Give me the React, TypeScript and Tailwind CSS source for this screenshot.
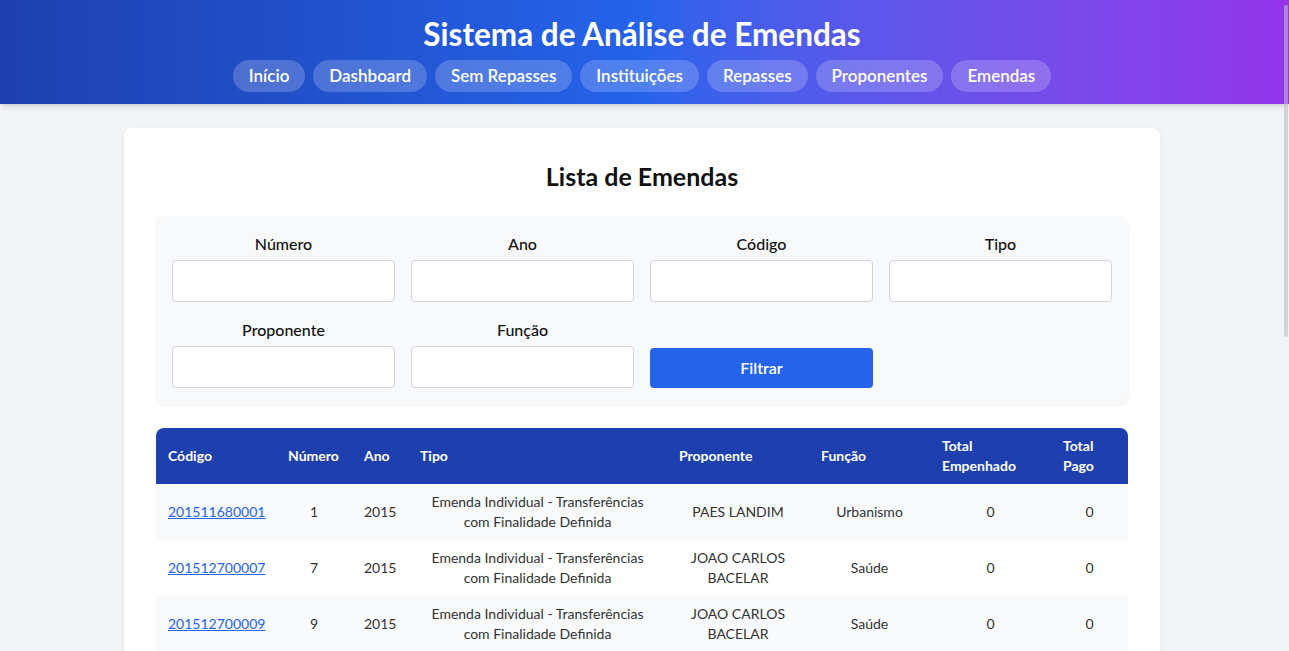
import React from 'react';

interface Emenda {
    codigo: string;
    numero: number;
    ano: number;
    tipo: string;
    proponente: string;
    funcao: string;
    totalEmpenhado: string;
    totalPago: string;
}

const TIPO = 'Emenda Individual - Transferências com Finalidade Definida';

const emendas: Emenda[] = [
    { codigo: '201511680001', numero: 1, ano: 2015, tipo: TIPO, proponente: 'PAES LANDIM', funcao: 'Urbanismo', totalEmpenhado: '0', totalPago: '0' },
    { codigo: '201512700007', numero: 7, ano: 2015, tipo: TIPO, proponente: 'JOAO CARLOS BACELAR', funcao: 'Saúde', totalEmpenhado: '0', totalPago: '0' },
    { codigo: '201512700009', numero: 9, ano: 2015, tipo: TIPO, proponente: 'JOAO CARLOS BACELAR', funcao: 'Saúde', totalEmpenhado: '0', totalPago: '0' },
    { codigo: '201512700010', numero: 10, ano: 2015, tipo: TIPO, proponente: 'JOAO CARLOS BACELAR', funcao: 'Saúde', totalEmpenhado: '0', totalPago: '0' },
    { codigo: '201512790002', numero: 2, ano: 2015, tipo: TIPO, proponente: 'ARTHUR LIRA', funcao: 'Saúde', totalEmpenhado: '0', totalPago: '0' },
    { codigo: '201512860004', numero: 4, ano: 2015, tipo: TIPO, proponente: 'PAULO MAGALHAES', funcao: 'Urbanismo', totalEmpenhado: '0', totalPago: '0' },
    { codigo: '201513010008', numero: 8, ano: 2015, tipo: TIPO, proponente: 'RUBENS BUENO', funcao: 'Agricultura', totalEmpenhado: '0', totalPago: '0' },
    { codigo: '201513150005', numero: 5, ano: 2015, tipo: TIPO, proponente: 'JOSE ROCHA', funcao: 'Educação', totalEmpenhado: '0', totalPago: '0' },
];

const navItems = ['Início', 'Dashboard', 'Sem Repasses', 'Instituições', 'Repasses', 'Proponentes', 'Emendas'];

const Header: React.FC = () => {
    return (
        <header className="bg-gradient-to-r from-[#1e40af] via-[#2563eb] to-[#9333ea] pt-4 pb-3 shadow-md">
            <div className="mr-[5px]">
                <h1 className="text-center text-[31.5px] leading-9 font-bold text-white">Sistema de Análise de Emendas</h1>
                <nav className="mt-2 flex justify-center gap-2">
                    {navItems.map((item) => (
                        <a
                            key={item}
                            href="#"
                            className="h-8 px-4 flex items-center rounded-full bg-white/20 text-white text-[17px] font-semibold"
                        >
                            {item}
                        </a>
                    ))}
                </nav>
            </div>
        </header>
    );
};

interface FieldProps {
    label: string;
}

const Field: React.FC<FieldProps> = ({ label }) => (
    <div className="flex flex-col">
        <label className="text-center text-base leading-6 font-medium text-[#111] mb-1">{label}</label>
        <input className="h-[42px] rounded border border-[#d1d5db] bg-white px-3 text-sm focus:outline-none" />
    </div>
);

const Filters: React.FC = () => {
    return (
        <div className="bg-[#f8f9fa] rounded-lg shadow-[0_1px_3px_rgba(0,0,0,0.08)] p-4 grid grid-cols-4 gap-4 mb-6">
            <Field label="Número" />
            <Field label="Ano" />
            <Field label="Código" />
            <Field label="Tipo" />
            <Field label="Proponente" />
            <Field label="Função" />
            <div className="flex items-end">
                <button className="w-full h-10 rounded bg-[#2563eb] text-white text-base font-semibold">Filtrar</button>
            </div>
        </div>
    );
};

const EmendasTable: React.FC = () => {
    return (
        <div className="rounded-lg overflow-hidden">
            <table className="w-full table-fixed border-collapse text-sm">
                <colgroup>
                    <col className="w-[120px]" />
                    <col className="w-[76px]" />
                    <col className="w-[56px]" />
                    <col className="w-[259px]" />
                    <col className="w-[142px]" />
                    <col className="w-[121px]" />
                    <col className="w-[121px]" />
                    <col className="w-[77px]" />
                </colgroup>
                <thead className="bg-[#1e40af] text-white">
                    <tr className="h-14">
                        {['Código', 'Número', 'Ano', 'Tipo', 'Proponente', 'Função', 'Total Empenhado', 'Total Pago'].map((h) => (
                            <th key={h} className="px-3 py-2 text-left font-bold leading-5 align-middle">{h}</th>
                        ))}
                    </tr>
                </thead>
                <tbody className="text-[#333]">
                    {emendas.map((e, i) => (
                        <tr key={e.codigo} className={`h-14 ${i % 2 === 0 ? 'bg-[#f9fafb]' : 'bg-white'}`}>
                            <td className="px-3 py-2 leading-5">
                                <a href="#" className="text-[#2563eb] underline">{e.codigo}</a>
                            </td>
                            <td className="px-3 py-2 text-center leading-5">{e.numero}</td>
                            <td className="px-3 py-2 text-center leading-5">{e.ano}</td>
                            <td className="px-3 py-2 text-center leading-5">{e.tipo}</td>
                            <td className="px-3 py-2 text-center leading-5">{e.proponente}</td>
                            <td className="px-3 py-2 text-center leading-5">{e.funcao}</td>
                            <td className="px-3 py-2 text-center leading-5">{e.totalEmpenhado}</td>
                            <td className="px-3 py-2 text-center leading-5">{e.totalPago}</td>
                        </tr>
                    ))}
                </tbody>
            </table>
        </div>
    );
};

const App: React.FC = () => {
    return (
        <div className="relative h-screen overflow-hidden bg-[#f3f4f6]" style={{ fontFamily: 'Lato, "Noto Sans", sans-serif' }}>
            <div className="h-full overflow-y-auto [scrollbar-width:none]">
                <Header />
                <main className="mr-[5px]">
                    <div className="w-[1036px] mx-auto mt-6 mb-8 bg-white rounded-lg shadow-[0_2px_6px_rgba(0,0,0,0.06)] p-8">
                        <h2 className="text-center text-[25px] leading-8 font-bold text-[#111] mb-6">Lista de Emendas</h2>
                        <Filters />
                        <EmendasTable />
                    </div>
                </main>
            </div>
            {/* overlay scrollbar thumb */}
            <div className="absolute top-[5px] right-[1px] w-[4px] h-[332px] rounded-full bg-[rgba(190,190,195,0.6)]" />
        </div>
    );
};

export default App;
